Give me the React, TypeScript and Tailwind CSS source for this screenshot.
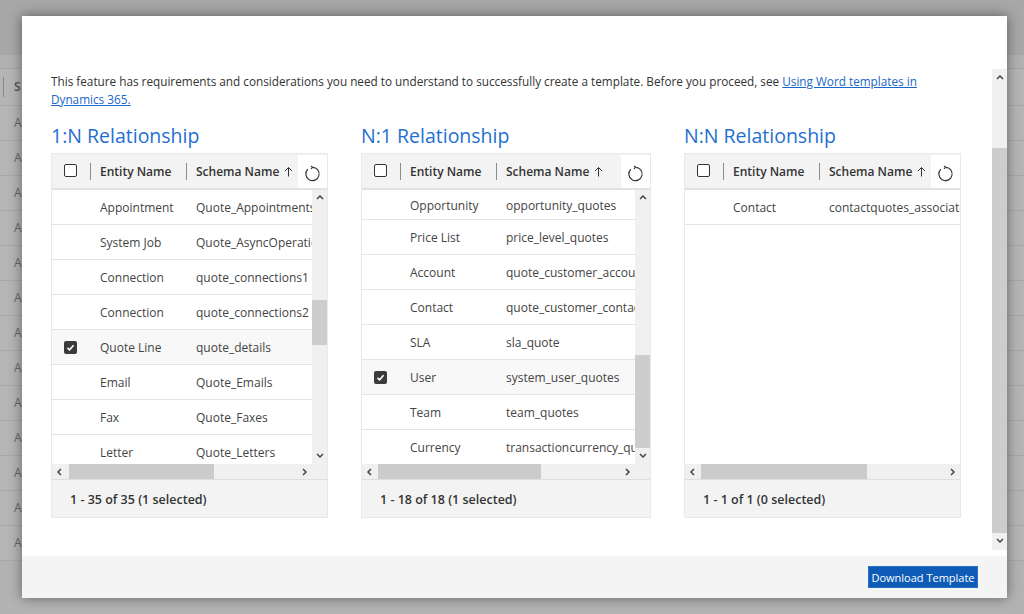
import React from "react";

type Row = { e: string; s: string; c?: boolean };

const rows1: Row[] = [
  { e: "Appointment", s: "Quote_Appointments" },
  { e: "System Job", s: "Quote_AsyncOperations" },
  { e: "Connection", s: "quote_connections1" },
  { e: "Connection", s: "quote_connections2" },
  { e: "Quote Line", s: "quote_details", c: true },
  { e: "Email", s: "Quote_Emails" },
  { e: "Fax", s: "Quote_Faxes" },
  { e: "Letter", s: "Quote_Letters" },
];

const rows2: Row[] = [
  { e: "Opportunity", s: "opportunity_quotes" },
  { e: "Price List", s: "price_level_quotes" },
  { e: "Account", s: "quote_customer_accounts" },
  { e: "Contact", s: "quote_customer_contacts" },
  { e: "SLA", s: "sla_quote" },
  { e: "User", s: "system_user_quotes", c: true },
  { e: "Team", s: "team_quotes" },
  { e: "Currency", s: "transactioncurrency_quotes" },
];

const rows3: Row[] = [{ e: "Contact", s: "contactquotes_association" }];

function Check({ checked }: { checked?: boolean }) {
  if (checked) {
    return (
      <div className="w-[13px] h-[13px] rounded-[2px] bg-[#3b3b3b] flex items-center justify-center">
        <svg width="9" height="9" viewBox="0 0 9 9">
          <path d="M1.5 4.8 L3.6 6.8 L7.6 2.2" fill="none" stroke="#fff" strokeWidth="1.6" />
        </svg>
      </div>
    );
  }
  return <div className="w-[13px] h-[13px] rounded-[2px] border border-[#333] bg-white" />;
}

function Chevron({ dir }: { dir: "up" | "down" | "left" | "right" }) {
  const d =
    dir === "up"
      ? "M1 5 L4 2 L7 5"
      : dir === "down"
      ? "M1 2 L4 5 L7 2"
      : dir === "left"
      ? "M5 1 L2 4 L5 7"
      : "M2 1 L5 4 L2 7";
  return (
    <svg width="8" height="8" viewBox="0 0 8 8">
      <path d={d} fill="none" stroke="#444" strokeWidth="1.5" />
    </svg>
  );
}

function RefreshIcon() {
  return (
    <svg width="19" height="19" viewBox="0 0 20 20">
      <path d="M10 3.5 A7 7 0 1 1 5.05 5.55" fill="none" stroke="#333" strokeWidth="1.2" />
      <path d="M8.4 1.9 L10.1 3.5 L8.4 5.1" fill="none" stroke="#333" strokeWidth="1.2" />
    </svg>
  );
}

function SortArrow() {
  return (
    <svg width="9" height="11" viewBox="0 0 9 11" className="ml-[5px]">
      <path d="M4.5 1.5 V10.5 M1 5 L4.5 1.5 L8 5" fill="none" stroke="#333" strokeWidth="1" />
    </svg>
  );
}

function Panel({
  width,
  rows,
  vthumb,
  hthumb,
  footer,
  firstRowH,
}: {
  width: number;
  rows: Row[];
  vthumb?: { top: number; height: number };
  hthumb: { left: number; width: number };
  footer: string;
  firstRowH: number;
}) {
  return (
    <div
      className="flex flex-col border border-[#e9e9e9] bg-white h-[365px]"
      style={{ width }}
    >
      {/* header */}
      <div className="flex h-[36px] shrink-0 items-stretch bg-[#f3f3f3] border-b-2 border-[#e2e2e2]">
        <div className="w-[38px] pl-[12px] flex items-center">
          <div className="-mt-[2px]">
            <Check />
          </div>
        </div>
        <div className="w-[96px] flex items-center pt-[1px]">
          <div className="w-px h-[17px] bg-[#8c8c8c]" />
          <span className="ml-[9px] font-semibold text-[12px] text-[#333]">Entity Name</span>
        </div>
        <div className="flex-1 min-w-0 flex items-center pt-[1px]">
          <div className="w-px h-[17px] bg-[#8c8c8c]" />
          <span className="ml-[9px] font-semibold text-[12px] text-[#333] whitespace-nowrap">Schema Name</span>
          <SortArrow />
        </div>
        <div className="w-[29px] mt-[1px] bg-white flex items-center justify-center pt-[4px]">
          <RefreshIcon />
        </div>
      </div>
      {/* body */}
      <div className="flex h-[274px] shrink-0">
        <div className="flex-1 min-w-0 overflow-hidden">
          {rows.map((r, i) => (
            <div
              key={i}
              className={`flex items-center pt-[2px] border-b border-[#e4e4e4] whitespace-nowrap text-[12px] text-[#444] ${
                r.c ? "bg-[#f8f8f8]" : "bg-white"
              }`}
              style={{ height: i === 0 ? firstRowH : 35 }}
            >
              <div className="w-[38px] shrink-0 pl-[12px] -mt-[2px]">{r.c ? <Check checked /> : null}</div>
              <div className="w-[96px] shrink-0 pl-[10px]">{r.e}</div>
              <div className="pl-[10px] shrink-0">{r.s}</div>
            </div>
          ))}
        </div>
        {vthumb ? (
          <div className="w-[15px] shrink-0 bg-[#f0f0f0] relative flex flex-col items-center justify-between py-[4px]">
            <Chevron dir="up" />
            <Chevron dir="down" />
            <div
              className="absolute left-0 right-0 bg-[#cdcdcd]"
              style={{ top: vthumb.top, height: vthumb.height }}
            />
          </div>
        ) : null}
      </div>
      {/* h scroll */}
      <div className="flex h-[15px] shrink-0 bg-[#f0f0f0]">
        <div className="flex-1 relative flex items-center justify-between">
          <div className="w-[15px] flex items-center justify-center">
            <Chevron dir="left" />
          </div>
          <div className="w-[15px] flex items-center justify-center">
            <Chevron dir="right" />
          </div>
          <div
            className="absolute top-0 bottom-0 bg-[#cbcbcb]"
            style={{ left: hthumb.left, width: hthumb.width }}
          />
        </div>
        {vthumb ? <div className="w-[15px]" /> : null}
      </div>
      {/* footer */}
      <div className="h-[38px] shrink-0 border-t border-[#dedede] bg-[#f3f3f3] flex items-center pl-[18px] pt-[3px]">
        <span className="font-semibold text-[12.5px] text-[#333]">{footer}</span>
      </div>
    </div>
  );
}

function Section({ title, children }: { title: string; children: React.ReactNode }) {
  return (
    <div className="flex flex-col">
      <h2 className="text-[19.5px] leading-[26px] text-[#1f6fd0] font-normal h-[31px] pt-[1px]">{title}</h2>
      {children}
    </div>
  );
}

export default function App() {
  const bgRows = Array.from({ length: 13 });
  return (
    <div
      className="relative w-[1024px] h-[614px] overflow-hidden bg-[#b3b3b3]"
      style={{ fontFamily: '"Open Sans", "Noto Sans", Arial, sans-serif' }}
    >
      {/* dimmed page behind */}
      <div className="flex flex-col">
        <div className="h-[55px] bg-[#a7a7a7]" />
        <div className="h-[14px] bg-[#b1b1b1] border-b border-[#a6a6a6]" />
        <div className="h-[37px] flex items-center border-b border-[#a8a8a8] bg-[#b5b5b5]">
          <div className="ml-[3px] w-px h-[20px] bg-[#888]" />
          <span className="ml-[10px] text-[12px] font-semibold text-[#555]">S</span>
        </div>
        {bgRows.map((_, i) => (
          <div key={i} className="h-[35px] flex items-center border-b border-[#a8a8a8] bg-[#b5b5b5]">
            <span className="ml-[14px] text-[12px] text-[#666]">A</span>
          </div>
        ))}
      </div>

      {/* modal */}
      <div className="absolute left-[22px] top-[16px] w-[985px] h-[582px] bg-white shadow-[0_0_12px_rgba(0,0,0,0.45)] flex flex-col">
        <div className="h-[53px] shrink-0" />
        <div className="h-[481px] shrink-0 flex">
          <div className="flex-1 min-w-0 overflow-hidden pl-[29px] pt-[3px]">
            <p className="text-[11.75px] leading-[18px] text-[#333] w-[900px]">
              This feature has requirements and considerations you need to understand to successfully create a
              template. Before you proceed, see{" "}
              <span className="text-[#1a67c7] underline">
                Using Word templates in
                <br />
                Dynamics 365.
              </span>
            </p>
            <div className="flex gap-[33px] mt-[14px]">
              <Section title="1:N Relationship">
                <Panel
                  width={277}
                  rows={rows1}
                  vthumb={{ top: 110, height: 45 }}
                  hthumb={{ left: 17, width: 145 }}
                  footer="1 - 35 of 35 (1 selected)"
                  firstRowH={35}
                />
              </Section>
              <Section title="N:1 Relationship">
                <Panel
                  width={290}
                  rows={rows2}
                  vthumb={{ top: 165, height: 93 }}
                  hthumb={{ left: 16, width: 163 }}
                  footer="1 - 18 of 18 (1 selected)"
                  firstRowH={30}
                />
              </Section>
              <Section title="N:N Relationship">
                <Panel
                  width={277}
                  rows={rows3}
                  hthumb={{ left: 16, width: 166 }}
                  footer="1 - 1 of 1 (0 selected)"
                  firstRowH={35}
                />
              </Section>
            </div>
          </div>
          {/* modal scrollbar */}
          <div className="w-[15px] shrink-0 bg-[#f0f0f0] relative flex flex-col items-center justify-between py-[5px]">
            <Chevron dir="up" />
            <Chevron dir="down" />
            <div className="absolute left-0 right-0 top-[79px] h-[385px] bg-[#cdcdcd]" />
          </div>
        </div>
        <div className="h-[6px] shrink-0" />
        <div className="flex-1 bg-[#f4f4f4] flex items-center justify-end pr-[29px]">
          <button className="h-[22px] w-[110px] bg-[#0f5cb8] border border-[#2a71c4] text-white text-[11px] leading-none whitespace-nowrap">
            Download Template
          </button>
        </div>
      </div>
    </div>
  );
}
